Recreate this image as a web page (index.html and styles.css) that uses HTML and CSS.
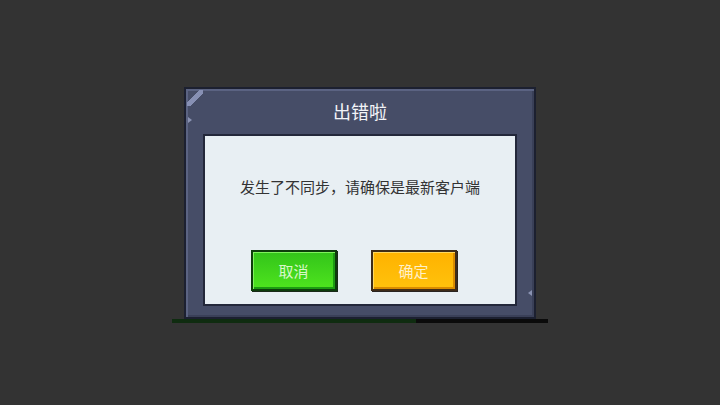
FILE: index.html
```html
<!DOCTYPE html>
<html lang="zh">
<head>
<meta charset="utf-8">
<title>出错啦</title>
<link rel="stylesheet" href="styles.css">
</head>
<body>
<div class="stage">
  <div class="dialog">
    <span class="corner-tl"></span>
    <span class="tick tick-left"></span>
    <span class="tick tick-right"></span>
    <div class="dialog-title">出错啦</div>
    <div class="panel">
      <p class="message">发生了不同步，请确保是最新客户端</p>
      <div class="actions">
        <button class="btn btn-cancel">取消</button>
        <button class="btn btn-ok">确定</button>
      </div>
    </div>
  </div>
  <div class="progress"><div class="progress-fill" style="width: 65%"></div></div>
</div>
</body>
</html>
```
FILE: styles.css
```css
* { box-sizing: border-box; }
html, body { margin: 0; height: 100%; }
body {
  background: #333333;
  font-family: "Noto Sans CJK SC", "Noto Sans", sans-serif;
}
.stage {
  display: flex;
  flex-direction: column;
  align-items: center;
  padding-top: 87px;
}
.dialog {
  position: relative;
  width: 352px;
  height: 232px;
  background: #464d67;
  border: 2px solid #1c2030;
  box-shadow: inset 2px 2px 0 #5b6382, inset -2px -2px 0 #3a4058;
  display: flex;
  flex-direction: column;
  align-items: center;
  padding: 0 17px 11px;
}
.corner-tl {
  position: absolute;
  left: 1px;
  top: 1px;
  width: 16px;
  height: 16px;
  background: linear-gradient(135deg, transparent 0 40%, #8790b4 40% 60%, transparent 60%);
}
.tick {
  position: absolute;
  width: 0;
  height: 0;
  border-top: 3px solid transparent;
  border-bottom: 3px solid transparent;
}
.tick-left { left: 2px; top: 28px; border-left: 4px solid #8a92b2; }
.tick-right { right: 2px; top: 201px; border-right: 4px solid #8a92b2; }
.dialog-title {
  height: 45px;
  line-height: 44px;
  color: #f2f4f8;
  font-size: 18px;
}
.panel {
  flex: 1;
  width: 100%;
  background: #e8eff3;
  border: 2px solid #23283a;
  display: flex;
  flex-direction: column;
  align-items: center;
  padding-top: 40px;
}
.message {
  margin: 0;
  font-size: 15px;
  line-height: 22px;
  color: #333333;
}
.actions {
  margin-top: 52px;
  margin-right: 13px;
  display: flex;
  gap: 34px;
}
.btn {
  width: 86px;
  height: 41px;
  font-family: inherit;
  font-size: 15px;
  border: 2px solid #1f2a16;
  padding: 0;
  cursor: pointer;
}
.btn-cancel {
  background: linear-gradient(#33c41a, #4ee41e);
  border-color: #0e3d0c;
  color: #d9f7c9;
  box-shadow: inset 1px 1px 0 #7ef25c, inset -2px -2px 0 #1c9a12, 1px 1px 0 #1a2a18;
}
.btn-ok {
  background: linear-gradient(#ffb200, #ffc20c);
  border-color: #3f2c18;
  color: #fff0c8;
  box-shadow: inset 1px 1px 0 #ffd860, inset -2px -2px 0 #d98c00, 1px 1px 0 #2a2420;
}
.progress {
  width: 376px;
  height: 4px;
  background: #0b0b0b;
}
.progress-fill {
  height: 100%;
  background: #0f2c10;
}
```
